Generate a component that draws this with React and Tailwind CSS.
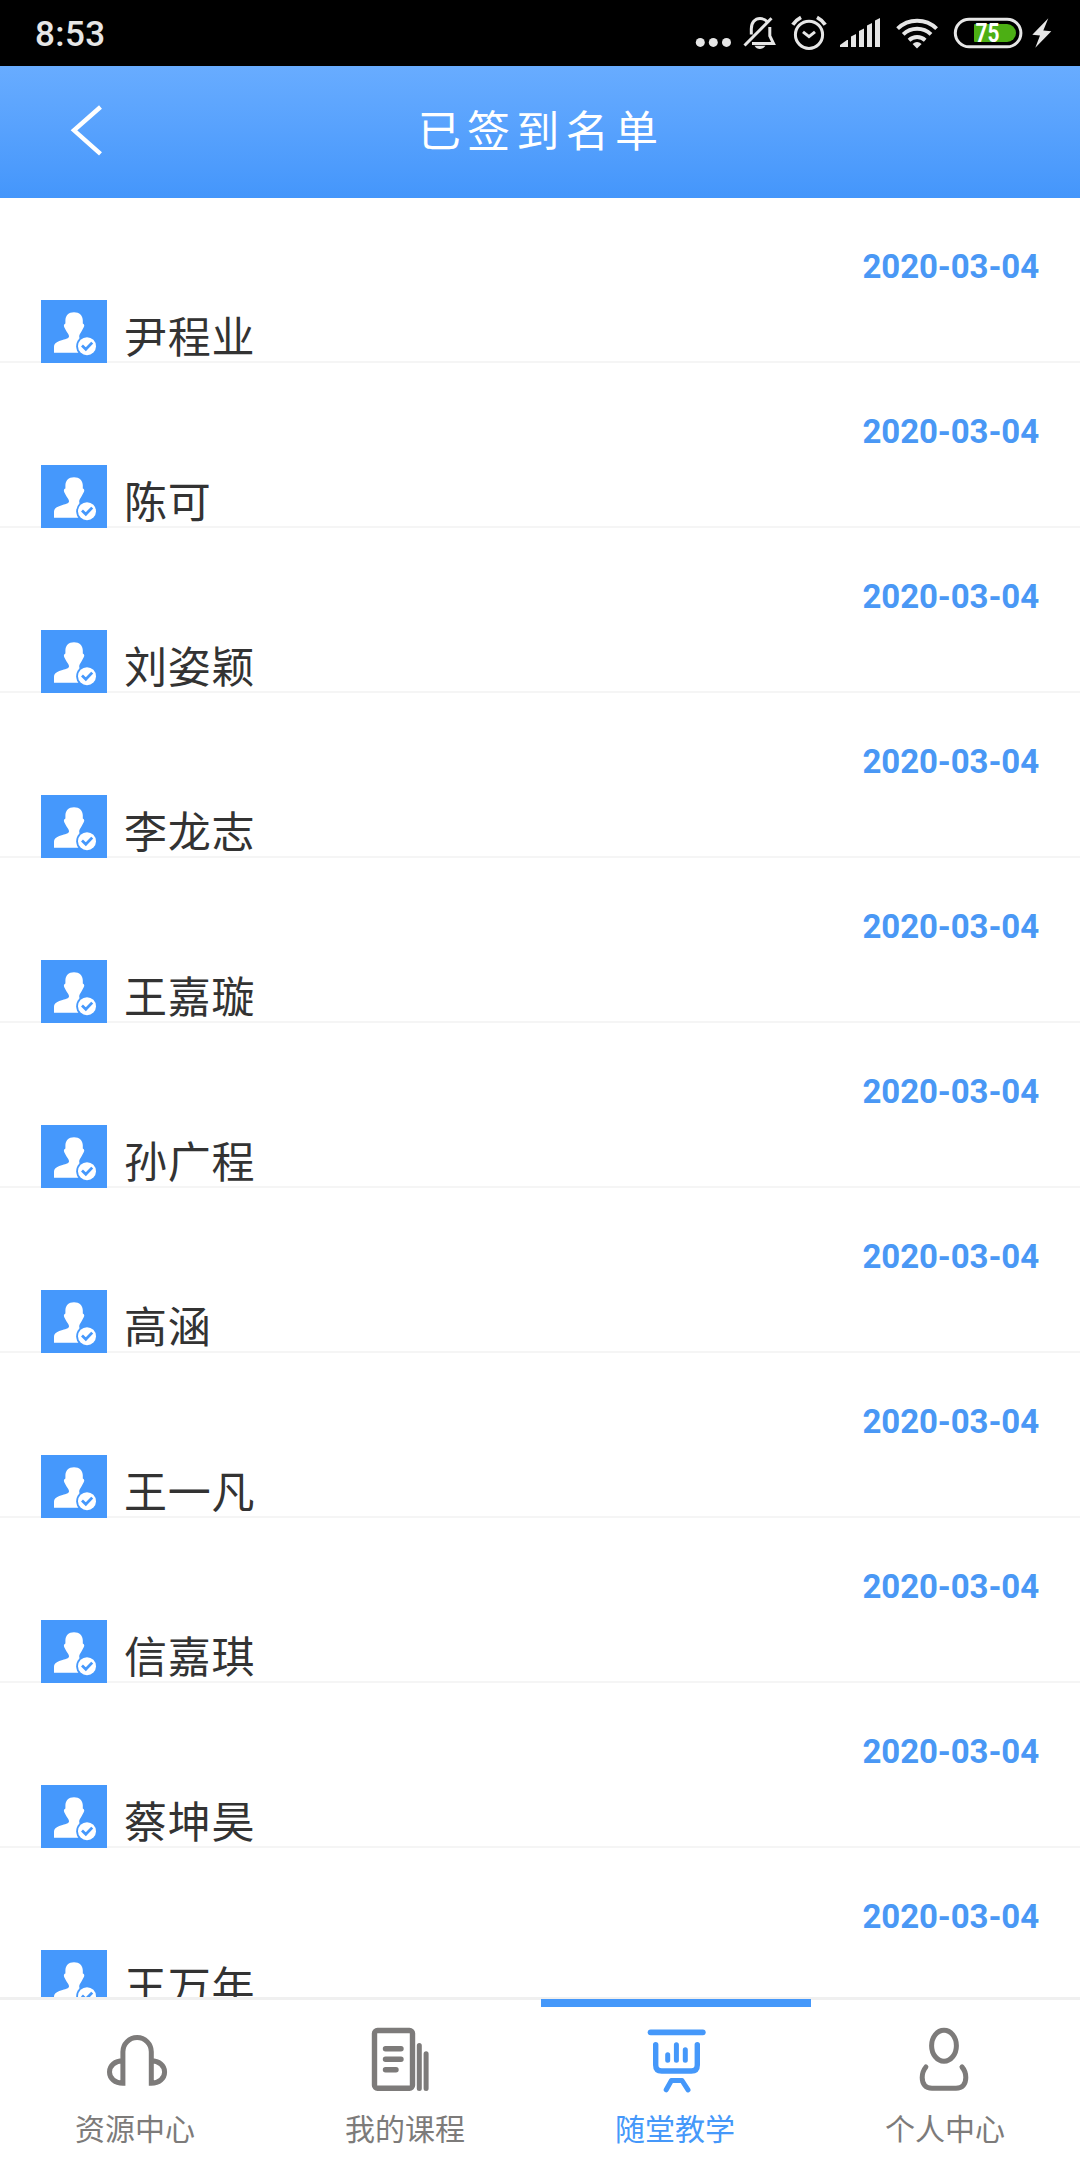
import { clsx } from "clsx";

const students = [
  { id: 1, name: "尹程业", date: "2020-03-04" },
  { id: 2, name: "陈可", date: "2020-03-04" },
  { id: 3, name: "刘姿颖", date: "2020-03-04" },
  { id: 4, name: "李龙志", date: "2020-03-04" },
  { id: 5, name: "王嘉璇", date: "2020-03-04" },
  { id: 6, name: "孙广程", date: "2020-03-04" },
  { id: 7, name: "高涵", date: "2020-03-04" },
  { id: 8, name: "王一凡", date: "2020-03-04" },
  { id: 9, name: "信嘉琪", date: "2020-03-04" },
  { id: 10, name: "蔡坤昊", date: "2020-03-04" },
  { id: 11, name: "王万年", date: "2020-03-04" },
];

function StatusBar() {
  return (
    <div className="flex h-[66px] shrink-0 items-center justify-between bg-black pr-5 pl-[35px] text-[#e6e6e6]">
      <span className="pt-[2px] font-['Roboto'] text-[35px] leading-none font-medium tracking-[0.4px]">
        8:53
      </span>
      <div className="flex">
        {/* More notifications */}
        <svg width="50" height="66" viewBox="690 0 50 66" fill="currentColor">
          <circle cx="700.3" cy="42.4" r="4.5" />
          <circle cx="713.3" cy="42.4" r="4.5" />
          <circle cx="726.5" cy="42.4" r="4.5" />
        </svg>
        {/* Muted */}
        <svg
          width="44"
          height="66"
          viewBox="740 0 44 66"
          fill="none"
          stroke="currentColor"
          strokeWidth="3"
        >
          <path d="M751.3 34.5V29C751.3 22.5 755 18.5 760 18.5C763 18.5 765.5 19.7 767 21.5" />
          <path d="M769.8 27V36L773.5 43.6H752" />
          <path d="M744.5 45.5L771.5 18.3" />
          <path
            d="M754.5 45.8H765.5Q763.5 49 760 49T754.5 45.8Z"
            fill="currentColor"
            stroke="none"
          />
        </svg>
        {/* Alarm */}
        <svg
          width="50"
          height="66"
          viewBox="784 0 50 66"
          fill="none"
          stroke="currentColor"
          strokeWidth="3"
        >
          <circle cx="809" cy="34.8" r="13.6" />
          <path d="M792.8 24.8Q796 20 801 17.4M817 17.4Q822 20 825.2 24.8" strokeWidth="3.8" />
          <path d="M803 31.8L809 36.6L815 31.8" />
        </svg>
        {/* Signal */}
        <svg width="54" height="66" viewBox="834 0 54 66" fill="currentColor">
          <path d="M840 47V45L847 40H848V47Z" />
          <path d="M851 47V36.5L856 34V47Z" />
          <path d="M859 47V31L864 28.5V47Z" />
          <path d="M867 47V25.5L872 23V47Z" />
          <path d="M875 47V20.5L880 18V47Z" />
        </svg>
        {/* Wifi */}
        <svg
          width="60"
          height="66"
          viewBox="888 0 60 66"
          fill="none"
          stroke="currentColor"
          strokeWidth="3.9"
        >
          <path d="M897.6 28.6A28 28 0 0 1 936.6 28.6" />
          <path d="M903.2 34.4A20 20 0 0 1 931 34.4" />
          <path d="M909 40.2A12 12 0 0 1 925.2 40.2" />
          <path d="M912.6 44Q917 40 921.6 44L917 48.4Z" fill="currentColor" stroke="none" />
        </svg>
        {/* Battery */}
        <svg width="80" height="66" viewBox="948 0 80 66">
          <rect
            x="955.3"
            y="19.2"
            width="65.6"
            height="27.6"
            rx="13.8"
            fill="none"
            stroke="currentColor"
            strokeWidth="3"
          />
          <path d="M975 24H1007A9 9 0 0 1 1007 42H975Q974 42 974 41V25Q974 24 975 24Z" fill="#4caf14" />
          <text
            x="975.4"
            y="41.8"
            textLength="24"
            lengthAdjust="spacingAndGlyphs"
            fill="#fff"
            className="font-['Roboto'] text-[25px] font-bold"
          >
            75
          </text>
        </svg>
        {/* Charging */}
        <svg width="32" height="66" viewBox="1028 0 32 66" fill="currentColor">
          <path d="M1048.3 18.3L1032.3 34.8L1040 35.5L1035.3 47.7L1051.3 31.3L1043.3 30.6Z" />
        </svg>
      </div>
    </div>
  );
}

function Header() {
  return (
    <div className="grid h-[132px] shrink-0 grid-cols-[1fr_auto_1fr] items-center bg-linear-to-b from-[#68acff] to-[#4496fb] text-white">
      <button type="button" className="pb-[3px] pl-[68px]">
        <svg
          width="36"
          height="54"
          viewBox="0 0 36 54"
          fill="none"
          stroke="currentColor"
          strokeWidth="4.4"
        >
          <path d="M32.5 3L6 26.3L32.5 49.8" />
        </svg>
      </button>
      <h1 className="pb-[8px] pl-[2px] text-[43px] leading-none tracking-[6.3px]">
        已签到名单
      </h1>
    </div>
  );
}

function Avatar() {
  return (
    <svg width="66" height="63" viewBox="0 0 66 63" className="shrink-0 bg-[#4598fc]">
      <path
        d="M33 12.2C38.5 12.2 41.8 15.5 41.8 20.5V23.5C43.6 24 43.6 26 42.6 27.6C41.8 29 41.2 30 40.6 31.2C39.8 33 38.2 34.6 38.2 36.2C38.2 40 41 40.5 46 42V52.8H13V47C13 42.5 17 41.5 21.5 40C25.5 38.7 28 38.2 28 36.2C28 34.6 26.4 33 25.4 31.2C24.8 30 24.2 29 23.4 27.6C22.6 26 22.6 24 24.4 23.5V20.5C24.4 15.5 27.5 12.2 33 12.2Z"
        fill="#fff"
      />
      <circle cx="46" cy="46.2" r="10.8" fill="#4598fc" />
      <circle cx="46" cy="46.2" r="9" fill="#fff" />
      <path d="M41 45.6L44.8 49.2L51.2 42.6" fill="none" stroke="#4598fc" strokeWidth="2.8" />
    </svg>
  );
}

function StudentRow({ student }) {
  return (
    <li className="flex h-[165px] shrink-0 items-end justify-between bg-[linear-gradient(#f5f5f5,#f5f5f5)] bg-size-[100%_2px] bg-bottom bg-no-repeat pr-[41px] pl-[41px]">
      <div className="flex items-end gap-[17px]">
        <Avatar />
        <span className="pb-[6px] text-[43px] leading-[45px] tracking-[0.8px] text-[#333]">
          {student.name}
        </span>
      </div>
      <span className="self-start pt-[52px] font-['Roboto'] text-[33px] leading-[34px] font-bold tracking-[-0.1px] text-[#4a98f5]">
        {student.date}
      </span>
    </li>
  );
}

const iconProps = {
  width: 80,
  height: 72,
  viewBox: "0 0 80 72",
  fill: "none",
  stroke: "currentColor",
  strokeWidth: 5,
};

const tabs = [
  {
    label: "资源中心",
    icon: (
      <svg {...iconProps}>
        <path d="M27.9 34.8C20 34.8 14.5 39.5 14.5 46S20 57.2 27.9 57.2V25.8A14.2 14.2 0 0 1 56.3 25.8V57.2C64 57.2 69.6 52.5 69.6 46S64 34.8 56.3 34.8" />
      </svg>
    ),
  },
  {
    label: "我的课程",
    icon: (
      <svg {...iconProps} strokeLinecap="round">
        <rect x="9.5" y="4.5" width="38" height="57.8" rx="3" strokeWidth="5.4" />
        <path d="M20.5 22.7H36M20.5 33.3H36M20.5 43.8H31" strokeWidth="5.4" />
        <path d="M54.3 19.5V62.5M61.1 27.8V62.5" />
      </svg>
    ),
  },
  {
    label: "随堂教学",
    active: true,
    icon: (
      <svg {...iconProps} strokeLinecap="round" strokeLinejoin="round">
        <path d="M15.6 6.3H67.8" strokeWidth="5.8" />
        <path d="M20.7 18.6V39Q20.7 45 26.7 45H56.3Q62.3 45 62.3 39V18.6" strokeWidth="5.4" />
        <path d="M32.7 28.8V34.2M41.4 18.8V34.2M50.3 23.8V34.2" />
        <path d="M31.2 63.8L36.4 54.5H47L53 63.8" />
      </svg>
    ),
  },
  {
    label: "个人中心",
    icon: (
      <svg {...iconProps} strokeLinecap="round">
        <ellipse cx="39" cy="19.7" rx="12.4" ry="15.5" />
        <path d="M20.9 41C18 44.5 17.2 47.5 17.2 51.5C17.2 58 20.5 62.2 27 62.2H51C57.5 62.2 60.8 58 60.8 51.5C60.8 47.5 60 44.5 57 41" />
      </svg>
    ),
  },
];

function TabBar() {
  return (
    <nav className="grid h-[163px] shrink-0 grid-cols-4 bg-[linear-gradient(#f0f0f0,#f0f0f0)] bg-size-[100%_3px] bg-no-repeat">
      {tabs.map((tab) => (
        <a
          key={tab.label}
          href="#"
          className={clsx(
            "flex flex-col items-center pt-[2px]",
            tab.active ? "text-[#4598fa]" : "text-[#7d7b7a]"
          )}
        >
          <span
            className={clsx("h-2 w-full", tab.active && "ml-[2px] bg-[#4598fa]")}
          />
          <span className="pt-[19px]">{tab.icon}</span>
          <span className="pt-3 text-[30px] leading-[34px]">{tab.label}</span>
        </a>
      ))}
    </nav>
  );
}

export default function App() {
  return (
    <div className="flex h-[2160px] w-[1080px] flex-col overflow-hidden bg-white font-['Noto_Sans_CJK_SC',sans-serif]">
      <StatusBar />
      <Header />
      <ul className="flex min-h-0 flex-1 flex-col overflow-hidden">
        {students.map((student) => (
          <StudentRow key={student.id} student={student} />
        ))}
      </ul>
      <TabBar />
    </div>
  );
}
